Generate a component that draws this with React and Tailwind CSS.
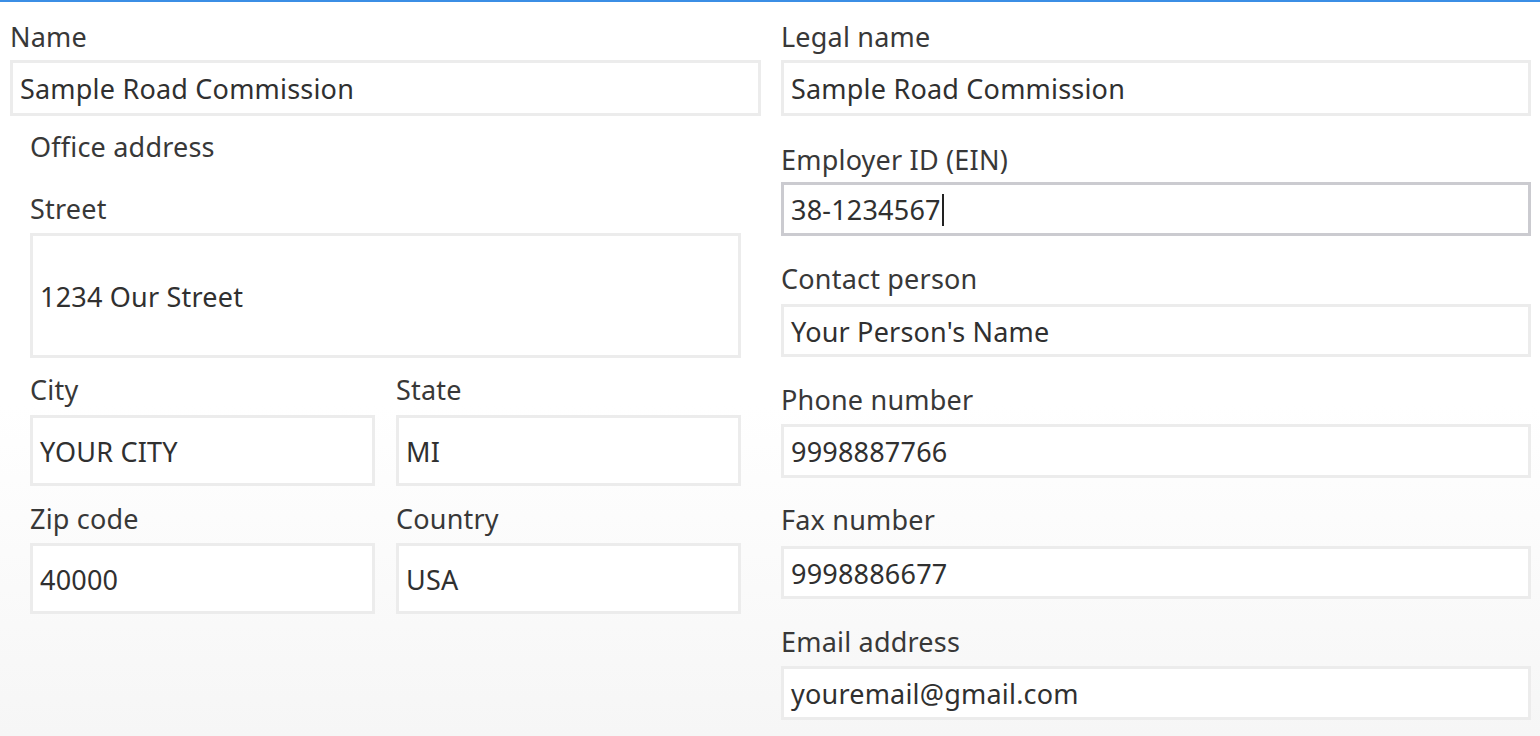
import React from 'react';

const font = { fontFamily: '"Noto Sans", "Open Sans", sans-serif' };

function Box({ value, className = '', focused = false }) {
  return (
    <div
      className={`flex items-center bg-white pl-[7px] pt-[3px] text-[27px] tracking-[0.2px] text-[#303030] border-[3px] ${
        focused ? 'border-[#cbcbd0]' : 'border-[#ececec]'
      } ${className}`}
    >
      <span className="whitespace-nowrap">{value}</span>
      {focused && <span className="ml-[1px] mb-[2px] h-[32px] w-[2px] bg-[#222]" />}
    </div>
  );
}

function Label({ children, className = '' }) {
  return (
    <div className={`h-[32px] leading-[32px] text-[27px] tracking-[0.2px] text-[#383838] whitespace-nowrap ${className}`}>
      {children}
    </div>
  );
}

const rightFields = [
  { label: 'Legal name', value: 'Sample Road Commission', mt: 'mt-[19px]', gap: 'mt-[7px]', h: 'h-[56px]' },
  { label: 'Employer ID (EIN)', value: '38-1234567', mt: 'mt-[28px]', gap: 'mt-[6px]', h: 'h-[54px]', focused: true },
  { label: 'Contact person', value: "Your Person's Name", mt: 'mt-[27px]', gap: 'mt-[9px]', h: 'h-[53px]' },
  { label: 'Phone number', value: '9998887766', mt: 'mt-[27px]', gap: 'mt-[8px]', h: 'h-[54px]' },
  { label: 'Fax number', value: '9998886677', mt: 'mt-[26px]', gap: 'mt-[10px]', h: 'h-[53px]' },
  { label: 'Email address', value: 'youremail@gmail.com', mt: 'mt-[27px]', gap: 'mt-[8px]', h: 'h-[54px]' },
];

export default function App() {
  return (
    <div
      style={font}
      className="w-[1540px] h-[736px] overflow-hidden border-t-2 border-[#3b8ee5] bg-linear-to-b from-white from-55% to-[#f6f6f6]"
    >
      <div className="flex gap-[20px] pl-[10px] pr-[9px]">
        {/* left side */}
        <div className="w-[751px] flex flex-col">
          <Label className="mt-[19px]">Name</Label>
          <Box value="Sample Road Commission" className="mt-[7px] h-[56px]" />

          <div className="px-[20px] flex flex-col">
            <Label className="mt-[15px]">Office address</Label>
            <Label className="mt-[30px]">Street</Label>
            <Box value="1234 Our Street" className="mt-[8px] h-[125px]" />

            <div className="grid grid-cols-2 gap-x-[21px] mt-[16px]">
              <div className="flex flex-col">
                <Label>City</Label>
                <Box value="YOUR CITY" className="mt-[9px] h-[71px]" />
              </div>
              <div className="flex flex-col">
                <Label>State</Label>
                <Box value="MI" className="mt-[9px] h-[71px]" />
              </div>
            </div>

            <div className="grid grid-cols-2 gap-x-[21px] mt-[17px]">
              <div className="flex flex-col">
                <Label>Zip code</Label>
                <Box value="40000" className="mt-[8px] h-[71px]" />
              </div>
              <div className="flex flex-col">
                <Label>Country</Label>
                <Box value="USA" className="mt-[8px] h-[71px]" />
              </div>
            </div>
          </div>
        </div>

        {/* right side */}
        <div className="w-[750px] flex flex-col">
          {rightFields.map((f) => (
            <div key={f.label} className={`flex flex-col ${f.mt}`}>
              <Label>{f.label}</Label>
              <Box value={f.value} focused={f.focused} className={`${f.gap} ${f.h}`} />
            </div>
          ))}
        </div>
      </div>
    </div>
  );
}
